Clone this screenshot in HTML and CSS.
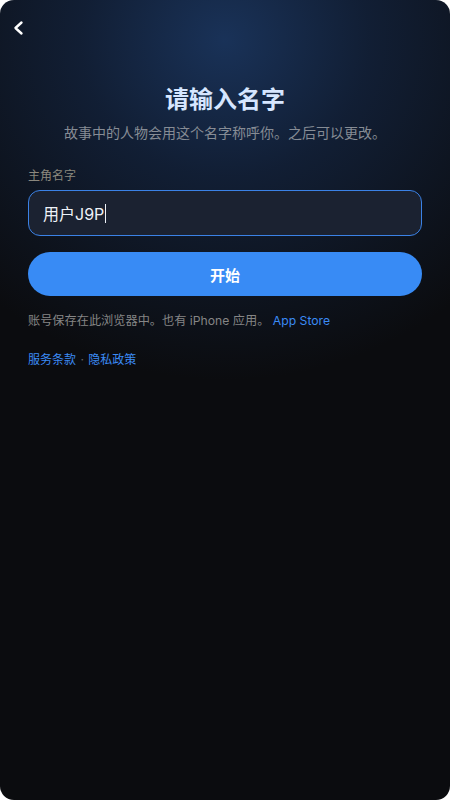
FILE: index.html
```html
<!DOCTYPE html>
<html lang="zh-CN">
<head>
    <meta charset="UTF-8">
    <meta name="viewport" content="width=device-width, initial-scale=1.0">
    <title>请输入名字</title>
    <link rel="stylesheet" href="styles.css">
</head>
<body>
    <div class="screen">
        <button class="back" aria-label="返回">
            <svg width="16" height="16" viewBox="0 0 16 16">
                <path d="M10.5 2.5 L4.5 8 L10.5 13.5" fill="none" stroke="#fff" stroke-width="2.4" stroke-linecap="round" stroke-linejoin="round"/>
            </svg>
        </button>

        <h1 class="title">请输入名字</h1>
        <p class="subtitle">故事中的人物会用这个名字称呼你。之后可以更改。</p>

        <form class="name-form">
            <label for="name" class="label">主角名字</label>
            <div class="input-box">
                <span class="input-text">用户J9P</span><span class="caret"></span>
            </div>
            <button type="submit" class="start">开始</button>
        </form>

        <p class="note">账号保存在此浏览器中。也有 iPhone 应用。 <a href="#" class="link">App Store</a></p>

        <p class="legal"><a href="#" class="link">服务条款</a> <span class="dot">·</span> <a href="#" class="link">隐私政策</a></p>
    </div>
</body>
</html>
```

FILE: styles.css
```css
html, body {
    margin: 0;
    padding: 0;
    background-color: #fff;
}

body {
    font-family: Inter, "Noto Sans CJK SC", sans-serif;
}

.screen {
    box-sizing: border-box;
    width: 450px;
    height: 800px;
    border-radius: 14px;
    overflow: hidden;
    padding: 0 28px;
    background-color: #0b0c0f;
    background-image: radial-gradient(ellipse 360px 340px at 225px 40px, rgba(26, 52, 92, 0.95) 0%, rgba(20, 38, 68, 0.7) 40%, rgba(11, 12, 15, 0) 100%);
}

.back {
    display: block;
    background: none;
    border: none;
    padding: 0;
    margin: 20px 0 0 -17px;
    width: 16px;
    height: 16px;
    cursor: pointer;
}

.back svg {
    display: block;
}

.title {
    margin: 48px 0 0;
    text-align: center;
    font-size: 24px;
    line-height: 32px;
    font-weight: 700;
    color: #d6e6ff;
}

.subtitle {
    margin: 7px 0 0;
    text-align: center;
    font-size: 14px;
    line-height: 20px;
    color: #868c95;
}

.name-form {
    margin-top: 25px;
    display: flex;
    flex-direction: column;
}

.label {
    font-size: 12px;
    line-height: 16px;
    color: #8b887e;
}

.input-box {
    box-sizing: border-box;
    margin-top: 6px;
    height: 46px;
    display: flex;
    align-items: center;
    padding: 0 14px;
    border: 1px solid #3b82e6;
    border-radius: 12px;
    background-color: #1b2231;
}

.input-text {
    font-size: 16px;
    color: #eef2f8;
}

.caret {
    display: inline-block;
    width: 1px;
    height: 19px;
    margin-left: 1px;
    background-color: #eef2f8;
}

.start {
    margin-top: 16px;
    height: 44px;
    border: none;
    border-radius: 22px;
    background-color: #388bf5;
    color: #fff;
    font-family: inherit;
    font-size: 15px;
    font-weight: 700;
    cursor: pointer;
}

.note {
    margin: 16px 0 0;
    font-size: 12.2px;
    line-height: 18px;
    color: #858585;
}

.link {
    color: #3b8bf5;
    text-decoration: none;
}

.legal {
    margin: 21px 0 0;
    font-size: 12px;
    line-height: 18px;
}

.dot {
    color: #666;
    margin: 0 1px;
}
```
